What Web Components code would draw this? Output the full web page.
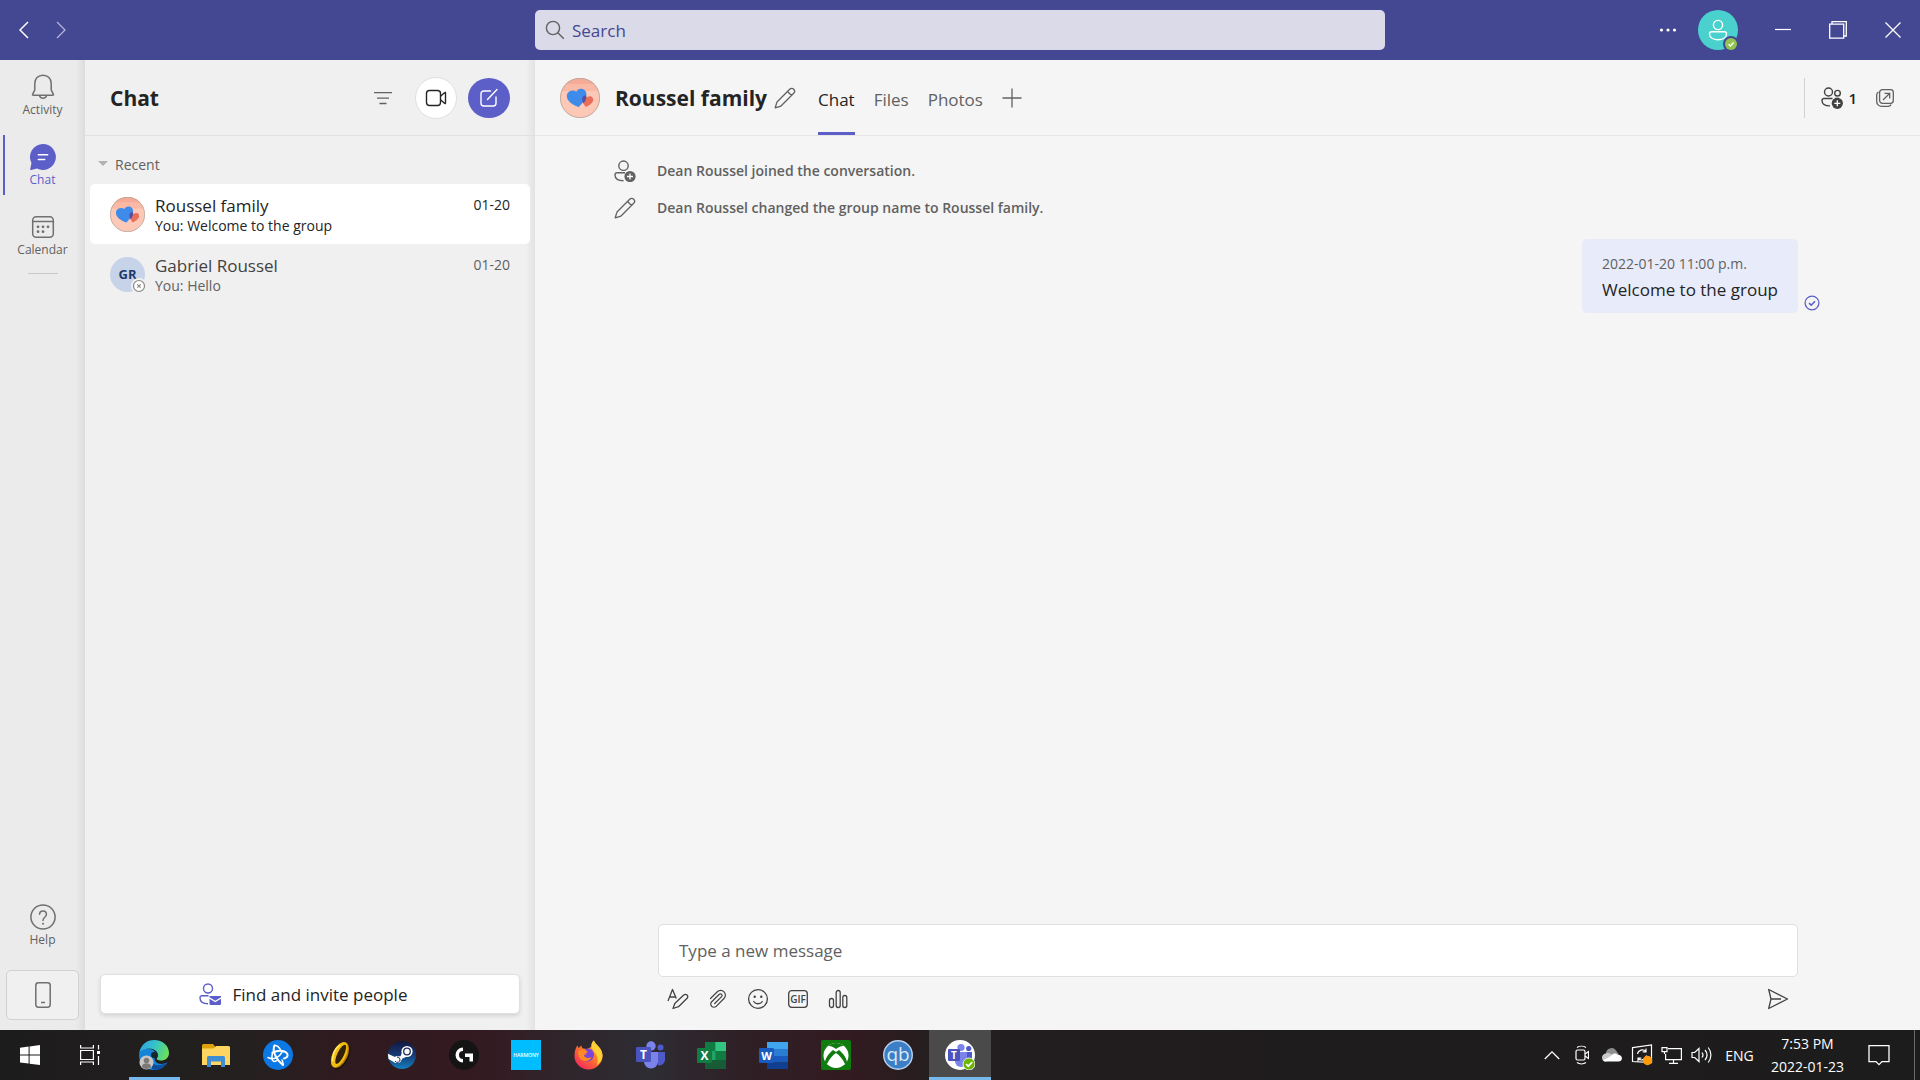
<!DOCTYPE html>
<html lang="en">
<head>
<meta charset="utf-8">
<meta name="viewport" content="width=device-width, initial-scale=1">
<title>Roussel family | Teams</title>
<style>
    :root {
        --accent: #5b5fc7;
        --brand: #444791;
        --line: #e0e0e0;
        --text: #242424;
        --muted: #616161;
        --fs-xs: 12px;
        --fs-sm: 14px;
        --fs-md: 17px;
        --fs-lg: 21px;
    }
    html, body { height: 100%; }
    body {
        margin: 0;
        overflow: hidden;
        font-family: "Segoe UI", "Open Sans", "Noto Sans", sans-serif;
        color: var(--text);
    }
</style>
</head>
<body>
<teams-app></teams-app>

<script>
// name: [width, height, svg content]
const ICONS = {
    back: [10, 18, '<path d="M9 1 1 9l8 8" fill="none" stroke="#fff" stroke-width="1.5"/>'],
    forward: [10, 18, '<path d="m1 1 8 8-8 8" fill="none" stroke="#b4b5d8" stroke-width="1.3"/>'],
    search: [20, 20, '<g fill="none" stroke="#616161" stroke-width="1.4"><circle cx="8" cy="8" r="6.6"/><path d="m12.8 12.8 6 6"/></g>'],
    more: [18, 6, '<g fill="#fff"><circle cx="2.5" cy="3" r="1.6"/><circle cx="9" cy="3" r="1.6"/><circle cx="15.5" cy="3" r="1.6"/></g>'],
    minimize: [16, 18, '<path d="M0 8.5h16" stroke="#fff" stroke-width="1.2"/>'],
    restore: [20, 20, '<g fill="none" stroke="#fff" stroke-width="1.3"><path d="M1.7 4.2h14v14h-14z"/><path d="M4 4V1.7h14.3V16H16"/></g>'],
    close: [18, 18, '<path d="m1.5 1.5 15 15m0-15-15 15" stroke="#fff" stroke-width="1.3"/>'],
    me: [40, 40, `<mask id="m"><rect width="40" height="40" fill="#fff"/><circle cx="33" cy="34" r="8" fill="#000"/></mask>
        <circle cx="20" cy="20" r="20" fill="#4bd1cd" mask="url(#m)"/>
        <g fill="none" stroke="#fff" stroke-width="1.4" mask="url(#m)"><circle cx="20" cy="15" r="4.6"/><path d="M13.5 21.7h13a2 2 0 0 1 2 2c0 4-4 6-8.500 6s-8.500-2-8.500-6a2 2 0 0 1 2-2z"/></g>
        <circle cx="33" cy="34" r="6" fill="#92c353"/><path d="m30.600 34.200 1.800 1.700 3.200-3.400" fill="none" stroke="#fff" stroke-width="1.4"/>`],
    bell: [26, 26, '<g fill="none" stroke="#707070" stroke-width="1.5" stroke-linejoin="round"><path d="M13 1.200c-5 0-8.200 3.600-8.200 8.300v6.300L2.600 20.300c-.2.500 0 .9.600.9h19.600c.6 0 .8-.4.6-.9l-2.200-4.500V9.500c0-4.700-3.200-8.300-8.200-8.300z"/><path d="M9.400 21.400a3.700 3.700 0 0 0 7.200 0"/></g>'],
    chat: [26, 26, '<path d="M13 0a13 13 0 1 1-6 24.600L1 26c-.5.100-1-.3-.8-.9l1.300-6A13 13 0 0 1 13 0z" fill="#5b5fc7"/><path d="M8.300 10.700h9.400M8.300 15.500h6.400" stroke="#fff" stroke-width="1.5" stroke-linecap="round"/>'],
    calendar: [26, 26, '<g fill="none" stroke="#707070" stroke-width="1.5"><rect x="2.7" y="2.7" width="20.6" height="20.6" rx="3.5"/><path d="M2.700 7.500h20.600"/></g><g fill="#707070"><circle cx="8" cy="12.8" r="1.4"/><circle cx="13" cy="12.8" r="1.4"/><circle cx="18" cy="12.8" r="1.4"/><circle cx="8" cy="17.7" r="1.4"/><circle cx="13" cy="17.7" r="1.4"/></g>'],
    help: [26, 26, '<g fill="none" stroke="#707070" stroke-width="1.5"><circle cx="13" cy="13" r="12.1"/><path d="M9.600 10.300c0-2 1.400-3.300 3.400-3.300s3.400 1.300 3.400 3.200c0 3-3.400 3-3.400 6.200" stroke-linecap="round"/></g><circle cx="13" cy="19.7" r="1" fill="#707070"/>'],
    phone: [18, 26, '<rect x="1.8" y=".8" width="14.4" height="24.4" rx="2.6" fill="none" stroke="#707070" stroke-width="1.5"/><path d="M7 20.500h4" stroke="#707070" stroke-width="1.5"/>'],
    filter: [20, 14, '<path d="M1 1.700h18M4 7.100h12M6.500 12.500h7" stroke="#616161" stroke-width="1.3"/>'],
    video: [22, 18, '<g fill="none" stroke="#242424" stroke-width="1.4" stroke-linejoin="round"><rect x="1.5" y="1.5" width="14" height="15" rx="3"/><path d="m15.800 7 4-3.500c.3-.2.700 0 .7.400v10.200c0 .4-.4.6-.7.4l-4-3.500"/></g>'],
    compose: [20, 20, '<g fill="none" stroke="#fff" stroke-width="1.4" stroke-linecap="round"><path d="M11.500 3H4.700A2.700 2.700 0 0 0 2 5.700v9.600A2.700 2.700 0 0 0 4.700 18h9.600a2.700 2.700 0 0 0 2.700-2.700V9"/><path d="m8.500 11.500 9.500-10"/></g>'],
    caret: [10, 6, '<path d="M0 0h10L5 5z" fill="#b3b0ad"/>'],
    hearts: [40, 40, `<clipPath id="c"><circle cx="20" cy="20" r="20"/></clipPath>
        <g clip-path="url(#c)"><path d="M0 0h40v40H0z" fill="#fdc8b5"/><path d="M0 0h40v13H0z" fill="#f9b9a5"/><path d="M0 0h40v6H0z" fill="#f5ab97"/></g>
        <path d="M27 19.500c1.700-1.600 3.500-1.600 4.700-.8 1.600 1 2 3.200 1 5-1.200 2.200-3.900 4.100-6.900 5.300-1.600-2.200-3.600-4.500-3.600-7.200 0-3.400 3.200-4.800 4.800-2.300z" fill="#e8705a"/>
        <path d="M16.300 13.800c1.400-3.600 6.200-3.700 8.500-1.500 2.200 2.200 2 5.600.7 8.200-1.500 3-4.500 6-6.700 8.500-4.200-1.400-9.300-4-11.300-8-1.300-2.700-.8-6 1.700-7.500 2.400-1.400 5.400-1.100 7.100.3z" fill="#3f8bea"/>
        <path d="M26.200 17.700c-2.500-.9-4.300 1.300-4 4.100.1 1.300.6 2.400 1.300 3.500 1.800-2.200 3.200-4.700 2.700-7.600z" fill="#5a4da0"/>
        <circle cx="20" cy="20" r="19.600" fill="none" stroke="#b0a49f" stroke-width=".8"/>`],
    offline: [16, 16, '<circle cx="8" cy="8" r="8" fill="#f0f0f0"/><circle cx="8" cy="8" r="5.5" fill="#fff" stroke="#8a8886" stroke-width="1.2"/><path d="m6.300 6.300 3.400 3.400m0-3.400-3.400 3.400" stroke="#8a8886" stroke-width="1.2"/>'],
    pencil: [22, 22, '<g fill="none" stroke="#616161" stroke-width="1.3" stroke-linejoin="round"><path d="M15.700 2.300a2.800 2.800 0 0 1 4 4L7.500 18.500c-.4.4-.9.7-1.400.8L1.200 20.800l1.500-4.900c.1-.5.4-1 .8-1.400zM13.500 4.500l4 4"/></g>'],
    plus: [20, 20, '<path d="M10 .5v19M.5 10h19" stroke="#616161" stroke-width="1.3"/>'],
    personAdd: [22, 22, '<g fill="none" stroke="#616161" stroke-width="1.4"><circle cx="9.5" cy="5.7" r="4.7"/><path d="M11 12.700H3A2 2 0 0 0 1 14.700c0 3.800 3.500 6 8.500 6"/></g><circle cx="16" cy="16.5" r="5.6" fill="#616161"/><path d="M16 13.500v6m-3-3h6" stroke="#fff" stroke-width="1.3"/>'],
    peopleAdd: [22, 22, '<g fill="none" stroke="#424242" stroke-width="1.4"><circle cx="7.5" cy="5" r="4"/><circle cx="16.5" cy="6.2" r="2.8"/><path d="M11.500 11.500H3a2 2 0 0 0-2 2c0 3.700 2.800 5.400 8 5.400M14 11.500h4"/></g><circle cx="16.3" cy="16.3" r="5.6" fill="#424242"/><path d="M16.300 13.300v6m-3-3h6" stroke="#fff" stroke-width="1.3"/>'],
    popout: [18, 18, '<g fill="none" stroke="#616161" stroke-width="1.3"><rect x="3.6" y=".7" width="13.7" height="13.7" rx="2.8"/><path d="M2.500 3C1.300 3.500.7 4.500.7 6v6.500a4.800 4.800 0 0 0 4.800 4.800H12c1.500 0 2.500-.6 3-1.800M7 11l6.500-6.500M8.500 4.300h5.200v5.200"/></g>'],
    receipt: [16, 16, '<circle cx="8" cy="8" r="6.9" fill="none" stroke="#5b5fc7" stroke-width="1.3"/><path d="m5 8.200 2.200 2L11 6.300" fill="none" stroke="#5b5fc7" stroke-width="1.6"/>'],
    invite: [22, 22, '<g fill="none" stroke="#5b5fc7" stroke-width="1.4"><circle cx="9" cy="5.5" r="4.500"/><path d="M9.500 12.700H3a2 2 0 0 0-2 2c0 3.800 3.300 6 8 6"/></g><path d="M10.500 13h11.500v1.200l-5.700 3.600-5.800-3.600z" fill="#5b5fc7"/><path d="M10.500 15.800l5.800 3.500 5.700-3.500v5a1.200 1.200 0 0 1-1.200 1.200h-9.100a1.200 1.200 0 0 1-1.200-1.200z" fill="#5b5fc7"/>'],
    format: [22, 22, '<g fill="none" stroke="#424242" stroke-width="1.3" stroke-linejoin="round"><path d="M1 13 5.500 1.500 9.300 10.500M2.800 9h6"/><path d="M16.700 7a2.300 2.300 0 0 1 3.400 3.300L11.500 18.700 6 20.500l1.800-5z"/></g>'],
    clip: [20, 20, '<path d="m2.500 9.500 6.800-6.700a4.700 4.700 0 0 1 6.700 0 4.700 4.700 0 0 1 0 6.700l-7.800 7.800a3.100 3.100 0 0 1-4.500 0 3.100 3.100 0 0 1 0-4.500L11.300 5.300a1.600 1.600 0 0 1 2.300 2.300L6.700 14.500" fill="none" stroke="#424242" stroke-width="1.2" stroke-linecap="round"/>'],
    emoji: [22, 22, '<g fill="none" stroke="#424242" stroke-width="1.3"><circle cx="11" cy="11" r="9.4"/><path d="M6.700 13.500c2 3 6.600 3 8.600 0" stroke-linecap="round"/></g><circle cx="7.7" cy="8.8" r="1.2" fill="#424242"/><circle cx="14.3" cy="8.8" r="1.2" fill="#424242"/>'],
    gif: [22, 20, '<rect x="1.7" y="1.7" width="18.6" height="16.6" rx="3" fill="none" stroke="#424242" stroke-width="1.3"/><text x="11" y="13.5" font-size="10" font-weight="600" text-anchor="middle" fill="#424242">GIF</text>'],
    poll: [20, 20, '<g fill="none" stroke="#424242" stroke-width="1.3"><rect x="1.5" y="9.5" width="4" height="9" rx="2"/><rect x="8.2" y="1.5" width="4" height="17" rx="2"/><rect x="14.8" y="6.500" width="4" height="12" rx="2"/></g>'],
    send: [22, 22, '<path d="M1.700 1.500 20.500 11 1.700 20.500 4 11zM4 11h10" fill="none" stroke="#424242" stroke-width="1.3" stroke-linejoin="round"/>'],

    // taskbar
    windows: [20, 20, '<path d="M0 2.800 8.600 1.600v8H0zM9.600 1.500 20 0v9.600H9.600zM0 10.600h8.600v8L0 17.400zM9.600 10.600H20V20L9.600 18.700z" fill="#fff"/>'],
    taskview: [20, 20, '<g fill="none" stroke="#fff" stroke-width="1.2"><path d="M.6 5.500h12.800v9H.6zM.6 0v3h12.800V0M.6 20v-3h12.800v3M18.500 0v4.500M18.500 11v9"/></g><path d="M17 6h3v3h-3z" fill="#fff"/>'],
    edge: [32, 32, `<linearGradient id="a" x1="0" x2="1" y1=".2" y2=".5"><stop stop-color="#2fa5df"/><stop offset=".5" stop-color="#35c3c9"/><stop offset="1" stop-color="#6be05a"/></linearGradient>
        <path d="M1 16c0-4 4-6.500 8-6.500 5 0 9 2.500 9 6.500-2 2-2 5 0 7 3 3 8 2 11.500.500C26 28.500 21.500 31 16 31 8 31 1 25 1 16z" fill="#1484d8"/>
        <path d="M12 17c-1 6 4 10 10 9 3-.5 5-1.500 7.500-2.500C27 28 22 31 17 31c-5-1-7-8-5-14z" fill="#0d4f9e"/>
        <path d="M1.200 14C3 5 9 1 16 1c9 0 15 6 15 13 0 5-4 7.500-8 7.500-3 0-5-1-4-2.500 1-1 1-2 1-3 0-3.500-4-6.500-8.500-6.500S3 11 1.200 14z" fill="url(#a)"/>
        <circle cx="16" cy="16" r="3" fill="#15252f"/><circle cx="8.500" cy="23.500" r="7" fill="#c9c7c5"/><circle cx="8.500" cy="21.500" r="2.800" fill="#7c7977"/><path d="M3.700 28c.5-3 2.500-3.800 4.800-3.800s4.300.8 4.800 3.800a7 7 0 0 1-9.600 0z" fill="#7c7977"/>`],
    folder: [28, 24, '<path d="M0 2.500A1.500 1.500 0 0 1 1.500 1H11l2 2.500V6H0z" fill="#e0a008"/><path d="M0 5.500h11.500L14 3h12.500A1.500 1.500 0 0 1 28 4.500V22H0z" fill="#ffd562"/><path d="M5 24V14.500A1.500 1.500 0 0 1 6.500 13h15a1.500 1.500 0 0 1 1.500 1.500V24h-4v-5.500H9V24z" fill="#3f8ed4"/>'],
    battle: [30, 30, '<circle cx="15" cy="15" r="15" fill="#0c78e3"/><g fill="none" stroke="#fff" stroke-linecap="round" stroke-linejoin="round"><path d="M11.500 5.500c-2.500 5 1 13.500 8.500 19.500" stroke-width="2"/><path d="M9.500 12.500c7-3 14-1.500 15 2 .4 2-1.500 3.500-3.500 4" stroke-width="2"/><path d="M5 17.500c5 2.500 11 1 14.500-6.500" stroke-width="1.6"/><path d="M11.500 5.500c2-.5 4.500 1.500 6.500 5M9.500 13c-1 4-1 8 1.500 8.500 1.500.3 3-1 4-2M20 25c.3-1.500 0-3-1-5" stroke-width="1.5"/></g>'],
    ring: [26, 30, '<g transform="rotate(26 13 15)"><ellipse cx="15" cy="15.500" rx="7" ry="14" fill="#1b1006"/><ellipse cx="13" cy="15" rx="7.500" ry="14" fill="#b87f08"/><ellipse cx="12.300" cy="15" rx="6.500" ry="13.500" fill="#f0bf12"/><ellipse cx="13.300" cy="14" rx="3.300" ry="10.500" fill="#33200c"/><path d="M8.500 6c-2.500 5-2.500 12 .5 18" fill="none" stroke="#ffe96b" stroke-width="1.600"/></g>'],
    steam: [30, 28, '<linearGradient id="s" x2="0" y2="1"><stop stop-color="#14183f"/><stop offset=".5" stop-color="#173a74"/><stop offset="1" stop-color="#1480bd"/></linearGradient><circle cx="15" cy="14" r="14" fill="url(#s)"/><path d="m.8 12.800 7.700 3.400 5-1 2-4.700 8 3.500-8 3.500-2 3-5 1.500L1.500 18z" fill="#fff"/><circle cx="20" cy="10.5" r="5.6" fill="#fff"/><circle cx="20" cy="10.5" r="3.3" fill="#fff" stroke="#1b2b5a" stroke-width="1.3"/><circle cx="10.5" cy="18.5" r="3.6" fill="#fff"/><path d="M8 20a2.700 2.700 0 1 0 2-4" fill="none" stroke="#1b2b5a"/>'],
    ghub: [30, 30, '<circle cx="15" cy="15" r="15" fill="#141414"/><path d="M14 7.500V11a4 4 0 0 0 0 8v3.500a7.500 7.500 0 0 1 0-15zM16 13.500h8v8h-3.500V17H16z" fill="#fff"/>'],
    harmony: [30, 30, '<path d="M0 0h30v30H0z" fill="#00bdff"/><text x="15" y="17" font-size="5" font-weight="600" text-anchor="middle" fill="#fff">HARMONY</text>'],
    firefox: [30, 30, `<linearGradient id="f" x1="1" x2=".2" y2="1"><stop stop-color="#ffe63c"/><stop offset=".5" stop-color="#ff7a2a"/><stop offset="1" stop-color="#f5265f"/></linearGradient>
        <path d="M18.500 5c.3-2 1-3.500 2.500-4.500.5 2 2 3.500 4 5.500 3 3 4.500 6.500 4.500 10a14 13.500 0 0 1-28 0C1.500 11.500 2.500 8 4.500 5.500l1.200 2.800C7 6.500 7.500 6 8.500 5.500c0 1.500.5 2.500 1.500 3l4 .5 4-2z" fill="url(#f)"/>
        <path d="M12 9.500c4-2.500 9 0 9 5.500a6.500 6.500 0 0 1-6.500 6.500c-3.500 0-6-2.500-6-5.500l5-1.500z" fill="#7a45d8"/>
        <path d="M5.500 11c3-2.500 7-2 9.500 1-1 1-3 1-4 2.500-.5 3 4 4.500 7.500 2.500-1 3-4.500 5-8 3.800-4-1.300-6-5.500-5-9.800z" fill="#ff8a26"/>
        <path d="M18.500 5c.3-2 1-3.500 2.500-4.500.5 2 2 3.500 4 5.500 3 3 4.500 6.500 4.500 10-.5 4-2.500 7-5.500 9 1-4 1-8-1-11-1.500-2.500-4.500-4.500-4.500-9z" fill="#ffcf36"/>`],
    teams: [30, 30, '<circle cx="16" cy="6" r="4.700" fill="#7b83eb"/><circle cx="25.500" cy="7.500" r="3" fill="#5059c9"/><path d="M21 12h9v8a5.500 5.500 0 0 1-7 5.200z" fill="#5059c9"/><path d="M9 12h14v9.500a7 7 0 0 1-14 0z" fill="#7b83eb"/><rect x="1" y="7" width="15" height="15" rx="1.300" fill="#4b53bc"/><text x="8.500" y="19" font-size="12" font-weight="700" text-anchor="middle" fill="#fff">T</text>'],
    excel: [30, 30, '<path d="M8 2h21v27H8z" fill="#21a366"/><path d="M8 2h10.500v9H8z" fill="#107c41"/><path d="M18.500 2H29v9H18.500z" fill="#33c481"/><path d="M8 20h21v9H8z" fill="#185c37"/><path d="M18.500 11H29v9H18.500z" fill="#107c41"/><rect y="8" width="15" height="15" rx="1.3" fill="#107c41"/><text x="7.5" y="20" font-size="12" font-weight="700" text-anchor="middle" fill="#fff">X</text>'],
    word: [30, 30, '<path d="M8 2h21v7H8z" fill="#41a5ee"/><path d="M8 9h21v7H8z" fill="#2b7cd3"/><path d="M8 16h21v6.500H8z" fill="#185abd"/><path d="M8 22.500h21V29H8z" fill="#103f91"/><rect y="8" width="15" height="15" rx="1.3" fill="#185abd"/><text x="7.5" y="20" font-size="11" font-weight="700" text-anchor="middle" fill="#fff">W</text>'],
    xbox: [30, 30, '<rect width="30" height="30" rx="2" fill="#107c10"/><circle cx="15" cy="15.5" r="12.5" fill="#fff"/><path d="M7 6c3-.5 6 1.500 8 3 2-1.500 5-3.500 8-3-4-4-12-4-16 0zM12 10c-5 4-8 9-8 13l2 1c2-5 6-9 9-11 3 2 7 6 9 11l2-1c0-4-3-9-8-13l-3 2z" fill="#107c10"/>'],
    qb: [30, 30, '<circle cx="15" cy="15" r="14.3" fill="#3d7fc6" stroke="#b9d3ee" stroke-width="1.4"/><text x="15" y="21" font-size="19" text-anchor="middle" fill="#d9e8f7">qb</text>'],
    teamsActive: [30, 30, '<circle cx="15" cy="15" r="15" fill="#fff"/><circle cx="16" cy="7.5" r="3.6" fill="#7b83eb"/><circle cx="23.7" cy="8.5" r="2.6" fill="#5059c9"/><path d="M19 12h8v8h-7z" fill="#5059c9"/><path d="M10 12h12v9a6 6 0 0 1-12 0z" fill="#7b83eb"/><rect x="3" y="9" width="12" height="12" rx="1" fill="#4b53bc"/><text x="9" y="19" font-size="10" font-weight="700" text-anchor="middle" fill="#fff">T</text><circle cx="24" cy="24" r="6" fill="#6bb700" stroke="#e5efdb"/><path d="m21 24 2.300 2.200 4-4.200" fill="none" stroke="#fff" stroke-width="1.7"/>'],
    chevronUp: [16, 10, '<path d="m.8 9 7.200-7.200L15.200 9" fill="none" stroke="#fff" stroke-width="1.3"/>'],
    meetNow: [14, 20, '<g fill="none" stroke="#fff" stroke-width="1.2"><rect x="1" y="5" width="9" height="10" rx="1.5"/><path d="m10 9 3.500-2.500v7L10 11M2 2.500C4.500.8 8.500.8 11 2.500M2 17.500c2.500 1.700 6.500 1.700 9 0"/></g>'],
    cloud: [22, 14, '<path d="M5 6a5.500 5.500 0 0 1 10-3.500L19 8H4z" fill="#8f8f8f"/><path d="M4.500 5.500C8 4 11 6 13 9l-8 4.500A4 4 0 0 1 1 9.500c0-2 1.500-3.500 3.500-4z" fill="#c9c9c9"/><path d="M2 12c3-1 7-3 10-6 2-1 4 0 5 1 2.500-.3 4 1.500 4 3.500a3.500 3.500 0 0 1-3.500 3H5c-1.500 0-2.500-.5-3-1.500z" fill="#fff"/>'],
    update: [22, 22, '<g fill="none" stroke="#fff" stroke-width="1.2"><path d="M1.500 3.700 20.500 1v17.500l-19-1z"/><path d="M6.500 10a5 5 0 0 1 8.500-2.500M15 4.500v3.300h-3.300M15.500 11.500A5 5 0 0 1 7 14.500M7 17.500v-3.300h3.300"/></g><circle cx="16.5" cy="16.5" r="4.7" fill="#ff9a0a"/>'],
    network: [22, 20, '<g fill="none" stroke="#fff" stroke-width="1.2"><path d="M7 3.600h13.400v11H4.600V9M12.500 14.600v4M8 18.400h9M1 2.600h5v4H1zM3.500 6.600V9"/></g>'],
    volume: [22, 20, '<g fill="none" stroke="#fff" stroke-width="1.2"><path d="M1 7.500h2.700L8 3.500v13l-4.300-4H1zM11 7.500c1.200 1.500 1.200 3.500 0 5M14 5c2.500 3 2.500 7 0 10M17.200 2.500c3.600 4.500 3.600 10.500 0 15"/></g>'],
    notify: [22, 22, '<path d="M1 1.600h20v16h-7l-3 3-3-3H1z" fill="none" stroke="#fff" stroke-width="1.3"/>']
};

class UiIcon extends HTMLElement {
    connectedCallback() {
        const [w, h, body] = ICONS[this.getAttribute('name')];
        const size = this.getAttribute('size');
        this.attachShadow({ mode: 'open' }).innerHTML = `
            <style>
                :host { display: inline-flex; flex: none; }
                svg { display: block; }
            </style>
            <svg width="${size || w}" height="${size || h}" viewBox="0 0 ${w} ${h}" aria-hidden="true">${body}</svg>`;
    }
}
customElements.define('ui-icon', UiIcon);

// Rules every shadow root with controls needs
const RESET = `
    * { box-sizing: border-box; }
    button, input { font: inherit; color: inherit; background: none; border: 0; margin: 0; padding: 0; outline: 0; }
    button { cursor: pointer; display: flex; align-items: center; justify-content: center; }
`;

class ShadowElement extends HTMLElement {
    connectedCallback() {
        if (this.shadowRoot) return;
        this.attachShadow({ mode: 'open' }).innerHTML = `<style>${RESET}${this.styles()}</style>${this.markup()}`;
    }
    attr(name) { return this.getAttribute(name) || ''; }
}

customElements.define('title-bar', class extends ShadowElement {
    styles() {
        return `
            :host {
                display: grid;
                grid-template-columns: 535px minmax(200px, 850px) minmax(max-content, 1fr);
                align-items: center;
                height: 60px;
                background: var(--brand);
            }
            .history { display: flex; padding-left: 5px; }
            .history button { width: 37px; height: 40px; }
            .search {
                display: flex;
                align-items: center;
                gap: 7px;
                height: 40px;
                padding: 0 10px;
                border-radius: 5px;
                background: #dadae8;
                color: var(--brand);
                font-size: var(--fs-md);
            }
            input { flex: 1; min-width: 0; }
            input::placeholder { color: inherit; opacity: 1; }
            .window { display: flex; justify-content: flex-end; align-items: center; }
            .window button { width: 55px; height: 60px; }
            .window .more { width: 60px; }
            .window .me { width: 40px; margin-right: 17px; }
        `;
    }
    markup() {
        return `
            <div class="history">
                <button aria-label="Back"><ui-icon name="back"></ui-icon></button>
                <button aria-label="Forward"><ui-icon name="forward"></ui-icon></button>
            </div>
            <label class="search"><ui-icon name="search"></ui-icon><input type="text" placeholder="Search" aria-label="Search"></label>
            <div class="window">
                <button class="more" aria-label="Settings and more"><ui-icon name="more"></ui-icon></button>
                <button class="me" aria-label="Account"><ui-icon name="me"></ui-icon></button>
                <button aria-label="Minimize"><ui-icon name="minimize"></ui-icon></button>
                <button aria-label="Restore"><ui-icon name="restore"></ui-icon></button>
                <button aria-label="Close"><ui-icon name="close"></ui-icon></button>
            </div>
        `;
    }
});

customElements.define('nav-item', class extends ShadowElement {
    styles() {
        return `
            :host { display: block; color: var(--muted); }
            :host([active]) { color: var(--accent); }
            button {
                flex-direction: column;
                justify-content: flex-start;
                gap: 2px;
                width: 100%;
                height: 60px;
                padding-top: 9px;
                font-size: var(--fs-xs);
                line-height: 16px;
            }
            :host([active]) button { background: linear-gradient(var(--accent), var(--accent)) 3px 0 / 2px 100% no-repeat; }
        `;
    }
    markup() {
        return `<button><ui-icon name="${this.attr('icon')}"></ui-icon><slot></slot></button>`;
    }
});

customElements.define('nav-rail', class extends ShadowElement {
    styles() {
        return `
            :host {
                display: flex;
                flex-direction: column;
                flex: 0 0 85px;
                padding: 5px 0 10px;
                background: linear-gradient(to right, transparent 76px, #dcdcdc 85px) #ebebeb;
            }
            nav { display: flex; flex-direction: column; gap: 10px; }
            hr { width: 30px; margin: 8px auto 0; border: 0; border-top: 1px solid #c8c8c8; }
            .bottom { margin-top: auto; }
            .mobile {
                width: 73px;
                height: 50px;
                margin: 15px 6px 0;
                border: 1px solid #d1d1d1;
                border-radius: 5px;
                background: #f0f0f0;
            }
        `;
    }
    markup() {
        return `
            <nav>
                <nav-item icon="bell">Activity</nav-item>
                <nav-item icon="chat" active>Chat</nav-item>
                <nav-item icon="calendar">Calendar</nav-item>
            </nav>
            <hr>
            <div class="bottom">
                <nav-item icon="help">Help</nav-item>
                <button class="mobile" aria-label="Download the mobile app"><ui-icon name="phone"></ui-icon></button>
            </div>
        `;
    }
});

customElements.define('chat-item', class extends ShadowElement {
    styles() {
        return `
            :host { display: block; padding: 0 5px; color: var(--muted); }
            button {
                align-items: flex-start;
                gap: 10px;
                width: 100%;
                height: 60px;
                padding: 0 20px;
                border-radius: 5px;
                text-align: left;
                font-size: var(--fs-sm);
            }
            :host([selected]) button { background: #fff; color: var(--text); }
            .avatar { position: relative; display: flex; margin-top: 13px; }
            .initials {
                width: 35px;
                height: 35px;
                border-radius: 50%;
                background: #c7d3e8;
                color: #1f3a6e;
                font-size: 13px;
                font-weight: 700;
                line-height: 35px;
                text-align: center;
            }
            /* presence sits over the avatar's edge */
            .presence { position: absolute; right: -2px; bottom: -2px; }
            .text { flex: 1; min-width: 0; padding-top: 11px; line-height: 20px; }
            .name { font-size: var(--fs-md); line-height: 21px; color: #424242; }
            :host([selected]) .name { color: inherit; }
            time { padding-top: 11px; line-height: 20px; }
        `;
    }
    markup() {
        const initials = this.attr('initials');
        const avatar = initials
            ? `<span class="initials">${initials}</span><ui-icon class="presence" name="offline"></ui-icon>`
            : '<ui-icon name="hearts" size="35"></ui-icon>';
        return `
            <button>
                <span class="avatar">${avatar}</span>
                <div class="text"><div class="name">${this.attr('name')}</div><slot></slot></div>
                <time>${this.attr('date')}</time>
            </button>
        `;
    }
});

customElements.define('chat-list', class extends ShadowElement {
    styles() {
        return `
            :host {
                display: flex;
                flex-direction: column;
                flex: 0 0 450px;
                background: linear-gradient(to right, transparent 441px, #e2e2e2 450px) #f0f0f0;
            }
            header {
                display: flex;
                align-items: center;
                gap: 11px;
                height: 76px;
                padding: 0 25px;
                border-bottom: 1px solid var(--line);
            }
            h1 { flex: 1; margin: 0; font-size: var(--fs-lg); line-height: 28px; }
            header button { width: 42px; height: 42px; border-radius: 50%; }
            .meet { background: #fff; border: 1px solid var(--line); }
            .new { height: 40px; background: var(--accent); }
            .group {
                display: flex;
                align-items: center;
                gap: 7px;
                height: 38px;
                margin: 9px 0 1px 13px;
                align-self: flex-start;
                font-size: var(--fs-sm);
                color: var(--muted);
            }
            .invite {
                gap: 12px;
                height: 40px;
                margin: auto 15px 16px;
                padding-right: 14px;
                border: 1px solid var(--line);
                border-radius: 5px;
                background: #fff;
                box-shadow: 0 2px 4px rgba(0, 0, 0, .12);
                font-size: var(--fs-md);
                font-weight: 500;
            }
        `;
    }
    markup() {
        return `
            <header>
                <h1>Chat</h1>
                <button aria-label="Filter"><ui-icon name="filter"></ui-icon></button>
                <button class="meet" aria-label="Meet now"><ui-icon name="video"></ui-icon></button>
                <button class="new" aria-label="New chat"><ui-icon name="compose"></ui-icon></button>
            </header>
            <button class="group"><ui-icon name="caret"></ui-icon>Recent</button>
            <slot></slot>
            <button class="invite"><ui-icon name="invite"></ui-icon>Find and invite people</button>
        `;
    }
});

customElements.define('chat-header', class extends ShadowElement {
    styles() {
        return `
            :host {
                display: flex;
                align-items: center;
                height: 76px;
                padding: 0 26px 0 25px;
                border-bottom: 1px solid #e6e6e6;
            }
            h2 { margin: 0 7px 0 15px; font-size: var(--fs-lg); line-height: 28px; white-space: nowrap; }
            nav { display: flex; align-self: stretch; gap: 19px; margin-left: 22px; font-size: var(--fs-md); color: var(--muted); }
            nav button { border: solid transparent; border-width: 3px 0; padding-top: 3px; }
            nav .add { padding: 0; }
            nav .active { color: var(--text); font-weight: 500; border-bottom-color: var(--accent); }
            .actions { display: flex; align-items: center; gap: 19px; height: 40px; margin-left: auto; padding-left: 16px; border-left: 1px solid #d1d1d1; }
            .people { gap: 5px; font-size: 15px; font-weight: 600; }
        `;
    }
    markup() {
        return `
            <ui-icon name="hearts"></ui-icon>
            <h2><slot></slot></h2>
            <button aria-label="Name group chat"><ui-icon name="pencil"></ui-icon></button>
            <nav>
                <button class="active">Chat</button>
                <button>Files</button>
                <button>Photos</button>
                <button class="add" aria-label="Add a tab"><ui-icon name="plus"></ui-icon></button>
            </nav>
            <div class="actions">
                <button class="people" aria-label="View and add participants"><ui-icon name="peopleAdd"></ui-icon>1</button>
                <button aria-label="Pop out chat"><ui-icon name="popout"></ui-icon></button>
            </div>
        `;
    }
});

customElements.define('system-message', class extends ShadowElement {
    styles() {
        return `
            :host {
                display: flex;
                align-items: center;
                gap: 21px;
                height: 37px;
                padding-left: 79px;
                font-size: var(--fs-sm);
                font-weight: 600;
                color: var(--muted);
            }
        `;
    }
    markup() {
        return `<ui-icon name="${this.attr('icon')}"></ui-icon><span><slot></slot></span>`;
    }
});

customElements.define('own-message', class extends ShadowElement {
    styles() {
        return `
            :host { display: flex; justify-content: flex-end; align-items: flex-end; gap: 6px; padding: 13px 100px 0 0; }
            .bubble { padding: 15px 20px 11px; border-radius: 5px; background: #e8ebfa; font-size: var(--fs-md); line-height: 24px; }
            time { display: block; margin-bottom: 4px; font-size: var(--fs-sm); line-height: 20px; color: var(--muted); }
            ui-icon { padding-bottom: 2px; }
        `;
    }
    markup() {
        return `<div class="bubble"><time>${this.attr('time')}</time><slot></slot></div><ui-icon name="receipt"></ui-icon>`;
    }
});

customElements.define('compose-box', class extends ShadowElement {
    styles() {
        return `
            :host { display: block; margin: auto 122px 9px 123px; }
            input {
                display: block;
                width: 100%;
                height: 53px;
                padding: 0 20px;
                border: 1px solid var(--line);
                border-radius: 5px;
                background: #fff;
                font-size: var(--fs-md);
            }
            input::placeholder { color: var(--muted); opacity: 1; }
            .tools { display: flex; }
            .tools button { width: 40px; height: 44px; }
            .tools .send { margin-left: auto; }
        `;
    }
    markup() {
        return `
            <input type="text" placeholder="Type a new message" aria-label="Type a new message">
            <div class="tools">
                <button aria-label="Format"><ui-icon name="format"></ui-icon></button>
                <button aria-label="Attach"><ui-icon name="clip"></ui-icon></button>
                <button aria-label="Emoji"><ui-icon name="emoji"></ui-icon></button>
                <button aria-label="GIF"><ui-icon name="gif"></ui-icon></button>
                <button aria-label="Poll"><ui-icon name="poll"></ui-icon></button>
                <button class="send" aria-label="Send"><ui-icon name="send"></ui-icon></button>
            </div>
        `;
    }
});

customElements.define('task-button', class extends ShadowElement {
    styles() {
        return `
            :host { display: block; }
            button { width: 62px; height: 50px; }
            :host([running]) button { background: linear-gradient(#76b9ed, #76b9ed) center bottom / 51px 3px no-repeat; }
            :host([active]) button { background: linear-gradient(#76b9ed, #76b9ed) center bottom / 100% 3px no-repeat #4b4a4a; }
        `;
    }
    markup() {
        return `<button aria-label="${this.attr('label')}"><ui-icon name="${this.attr('icon')}"></ui-icon></button>`;
    }
});

customElements.define('task-bar', class extends ShadowElement {
    styles() {
        return `
            :host {
                display: flex;
                height: 50px;
                background: linear-gradient(to right, #1d1c1c 0, #242020 250px, #2e1b1f 330px, #341a21 480px, #2f262c 570px, #2d2d33 650px, #2f2026 740px, #321b21 850px, #231e1f 940px, #1f1c1d 1300px, #1d1c1c 100%);
                color: #fff;
                font-size: var(--fs-sm);
            }
            .system button { width: 60px; height: 50px; }
            .system, .apps, .tray { display: flex; }
            .apps { padding-left: 3px; }
            .tray { margin-left: auto; }
            .tray button { width: 30px; }
            .tray .lang { width: 45px; }
            .tray .clock { flex-direction: column; width: 91px; line-height: 23px; }
            .tray .notify { width: 52px; margin-right: 9px; }
            .tray .desktop { width: 6px; border-left: 1px solid #6b6a6a; }
        `;
    }
    markup() {
        const apps = [
            ['edge', 'Edge', 'running'], ['folder', 'File Explorer'], ['battle', 'Battle.net'], ['ring', 'Ring'],
            ['steam', 'Steam'], ['ghub', 'G HUB'], ['harmony', 'Harmony'], ['firefox', 'Firefox'], ['teams', 'Teams'],
            ['excel', 'Excel'], ['word', 'Word'], ['xbox', 'Xbox'], ['qb', 'qBittorrent'], ['teamsActive', 'Microsoft Teams', 'active']
        ];
        const tray = ['chevronUp', 'meetNow', 'cloud', 'update', 'network', 'volume'];
        return `
            <div class="system">
                <button aria-label="Start"><ui-icon name="windows"></ui-icon></button>
                <button aria-label="Task View"><ui-icon name="taskview"></ui-icon></button>
            </div>
            <div class="apps">
                ${apps.map(([icon, label, state = '']) => `<task-button icon="${icon}" label="${label}" ${state}></task-button>`).join('')}
            </div>
            <div class="tray">
                ${tray.map(icon => `<button aria-label="${icon}"><ui-icon name="${icon}"></ui-icon></button>`).join('')}
                <button class="lang">ENG</button>
                <button class="clock"><span>7:53 PM</span><span>2022-01-23</span></button>
                <button class="notify" aria-label="Notifications"><ui-icon name="notify"></ui-icon></button>
                <button class="desktop" aria-label="Show desktop"></button>
            </div>
        `;
    }
});

customElements.define('teams-app', class extends ShadowElement {
    styles() {
        return `
            :host { display: flex; flex-direction: column; height: 100vh; }
            main { display: flex; flex: 1; min-height: 0; background: #f5f5f5; }
            .pane { display: flex; flex-direction: column; flex: 1; min-width: 0; }
            .log { padding-top: 16px; }
        `;
    }
    markup() {
        return `
            <title-bar></title-bar>
            <main>
                <nav-rail></nav-rail>
                <chat-list>
                    <chat-item name="Roussel family" date="01-20" selected>You: Welcome to the group</chat-item>
                    <chat-item name="Gabriel Roussel" date="01-20" initials="GR">You: Hello</chat-item>
                </chat-list>
                <section class="pane">
                    <chat-header>Roussel family</chat-header>
                    <div class="log">
                        <system-message icon="personAdd">Dean Roussel joined the conversation.</system-message>
                        <system-message icon="pencil">Dean Roussel changed the group name to Roussel family.</system-message>
                        <own-message time="2022-01-20 11:00 p.m.">Welcome to the group</own-message>
                    </div>
                    <compose-box></compose-box>
                </section>
            </main>
            <task-bar></task-bar>
        `;
    }
});
</script>
</body>
</html>
